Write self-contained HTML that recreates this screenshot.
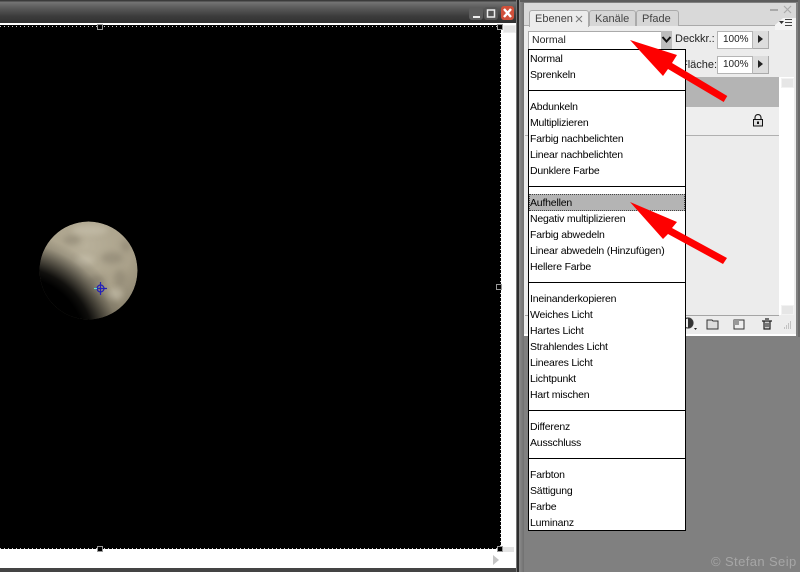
<!DOCTYPE html>
<html><head><meta charset="utf-8">
<style>
html,body{margin:0;padding:0;background:#808080}
body{width:800px;height:572px;position:relative;overflow:hidden;font-family:"Liberation Sans",sans-serif;font-size:11px;color:#000}
.a{position:absolute}
.t{position:absolute;white-space:nowrap;line-height:16px}
.m{position:absolute;left:1px;line-height:16px;white-space:nowrap;height:16px;font-size:10.5px;letter-spacing:-.2px}
.s{position:absolute;left:0;width:156px;height:1px;background:#000}
</style></head><body>
<!-- document window -->
<div class="a" style="left:0;top:0;width:520px;height:572px;background:#333"></div>
<div class="a" style="left:0;top:0;width:517px;height:23px;background:linear-gradient(#3a3a3a 0,#3a3a3a 1px,#747474 2px,#5a5a5a 8px,#3c3c3c 16px,#303030 23px)"></div>
<div class="a" style="left:0;top:23px;width:516px;height:545px;background:#fff"></div>
<div class="a" style="left:516px;top:0;width:1px;height:572px;background:#777"></div>
<div class="a" style="left:517px;top:0;width:2px;height:572px;background:#2c2c2c"></div>
<div class="a" style="left:519px;top:0;width:5px;height:572px;background:linear-gradient(90deg,#8c8c8c,#707070)"></div>
<div class="a" style="left:0;top:568px;width:516px;height:4px;background:#444"></div>
<div class="a" style="left:0;top:25px;width:500px;height:524px;background:#000"></div>
<div class="a" style="left:0;top:26px;width:500px;height:1px;background:repeating-linear-gradient(90deg,#ccc 0,#ccc 1px,#000 1px,#000 4px)"></div>
<div class="a" style="left:0;top:548px;width:500px;height:1px;background:repeating-linear-gradient(90deg,#ccc 0,#ccc 1px,#000 1px,#000 4px)"></div>
<div class="a" style="left:500px;top:25px;width:1px;height:524px;background:repeating-linear-gradient(#ccc 0,#ccc 1px,#000 1px,#000 4px)"></div>
<div class="a" style="left:97px;top:24px;width:4px;height:4px;border:1px solid #999;background:#000"></div>
<div class="a" style="left:97px;top:546px;width:4px;height:4px;border:1px solid #999;background:#000"></div>
<div class="a" style="left:496px;top:284px;width:4px;height:4px;border:1px solid #999;background:#000"></div>
<div class="a" style="left:497px;top:24px;width:4px;height:4px;border:1px solid #999;background:#000"></div>
<div class="a" style="left:497px;top:546px;width:4px;height:4px;border:1px solid #999;background:#000"></div>
<div class="a" style="left:503px;top:25px;width:11px;height:6px;background:#e4e4e4;border:1px solid #eee"></div>
<div class="a" style="left:503px;top:547px;width:11px;height:5px;background:#e4e4e4"></div>
<div class="a" style="left:493px;top:555px;width:0;height:0;border-left:6px solid #c4c4c4;border-top:5px solid transparent;border-bottom:5px solid transparent"></div>
<!-- window buttons -->
<svg class="a" style="left:466px;top:4px" width="52" height="20">
<rect x="3" y="3" width="14" height="13" rx="3" fill="#5c5c5c"/>
<rect x="7" y="12" width="7" height="2" fill="#eee"/>
<rect x="18" y="3" width="14" height="13" rx="3" fill="#555"/>
<rect x="21.500" y="6" width="7" height="7" fill="none" stroke="#eee" stroke-width="1.500"/>
<rect x="35" y="2" width="13" height="14" rx="3" fill="#d0503a"/>
<path d="M38 5l7 8M45 5l-7 8" stroke="#fff" stroke-width="2.400"/>
</svg>
<!-- moon -->
<svg class="a" style="left:20px;top:210px" width="130" height="120">
<defs>
<radialGradient id="g" gradientUnits="userSpaceOnUse" cx="66" cy="36" r="70">
<stop offset="0" stop-color="#b8b09a"/><stop offset=".65" stop-color="#aaa18a"/><stop offset="1" stop-color="#8f8772"/>
</radialGradient>
<radialGradient id="sh" gradientUnits="userSpaceOnUse" cx="-4" cy="136" r="112">
<stop offset="0" stop-color="#000"/><stop offset=".62" stop-color="#000"/><stop offset=".7" stop-color="#000" stop-opacity=".9"/><stop offset=".8" stop-color="#000" stop-opacity=".55"/><stop offset=".92" stop-color="#000" stop-opacity=".12"/><stop offset="1" stop-color="#000" stop-opacity="0"/>
</radialGradient>
<filter id="b"><feGaussianBlur stdDeviation="3"/></filter>
<clipPath id="c"><circle cx="68.500" cy="60.500" r="49"/></clipPath>
</defs>
<g clip-path="url(#c)">
<circle cx="68.500" cy="60.500" r="49" fill="url(#g)"/>
<g filter="url(#b)" fill="#8a8270" opacity=".55">
<ellipse cx="92" cy="48" rx="11" ry="6"/>
<ellipse cx="106" cy="36" rx="5" ry="6"/>
<ellipse cx="52" cy="30" rx="9" ry="5"/>
<ellipse cx="78" cy="70" rx="8" ry="5"/>
<ellipse cx="100" cy="68" rx="6" ry="8"/>
</g>
<g filter="url(#b)" fill="#cbc4b0" opacity=".55">
<ellipse cx="70" cy="20" rx="18" ry="5"/>
<ellipse cx="65" cy="50" rx="9" ry="5"/>
<ellipse cx="95" cy="84" rx="8" ry="6"/>
</g>
<rect width="130" height="120" fill="url(#sh)"/>
</g>
<g stroke="#2420b8" fill="none" stroke-width="1.200">
<circle cx="80.500" cy="78.500" r="3.500"/>
<path d="M80.500 72v13M74 78.500h13"/>
</g>
<path d="M74 78.500h3" stroke="#60e0d0" stroke-width="1.200"/>
</svg>
<!-- panel -->
<div class="a" style="left:520px;top:0;width:280px;height:2px;background:#5c5c5c"></div>
<div class="a" style="left:798px;top:0;width:2px;height:337px;background:#6a6a6a"></div>
<div class="a" style="left:524px;top:3px;width:272px;height:331px;background:#ececec;border-bottom:2px solid #fff"></div>
<div class="a" style="left:524px;top:3px;width:272px;height:23px;background:#d9d9d9"></div>
<div class="a" style="left:524px;top:25px;width:272px;height:1px;background:#aaa"></div>
<div class="a" style="left:529px;top:10px;width:58px;height:16px;background:#ececec;border:1px solid #aaa;border-bottom:none;border-radius:3px 3px 0 0"></div>
<div class="a" style="left:589px;top:10px;width:45px;height:15px;background:#d6d6d6;border:1px solid #aaa;border-bottom:none;border-radius:3px 3px 0 0"></div>
<div class="a" style="left:636px;top:10px;width:41px;height:15px;background:#d6d6d6;border:1px solid #aaa;border-bottom:none;border-radius:3px 3px 0 0"></div>
<div class="t" style="left:535px;top:11px;color:#444">Ebenen</div>
<svg class="a" style="left:575px;top:15px" width="9" height="9"><path d="M1 1l6 6M7 1l-6 6" stroke="#777" stroke-width="1"/></svg>
<div class="t" style="left:595px;top:11px;color:#444">Kanäle</div>
<div class="t" style="left:642px;top:11px;color:#444">Pfade</div>
<svg class="a" style="left:770px;top:4px" width="26" height="26">
<path d="M0 6h8" stroke="#999" stroke-width="1.500"/>
<path d="M14 2l7 7M21 2l-7 7" stroke="#aaa" stroke-width="1.200"/>
<path d="M5 21l8-7h13v12H5z" fill="#f4f4f4"/>
<path d="M9 17h5l-2.500 3z" fill="#333"/>
<path d="M15 15.500h7M15 18.500h7M15 21.500h7" stroke="#444" stroke-width="1"/>
</svg>
<!-- blend select -->
<div class="a" style="left:528px;top:31px;width:132px;height:17px;background:#fff;border:1px solid #aaa"></div>
<div class="t" style="left:532px;top:32px;color:#222;font-size:10.500px">Normal</div>
<div class="a" style="left:661px;top:31px;width:11px;height:18px;background:#bdbdbd"></div>
<svg class="a" style="left:661px;top:34px" width="11" height="11"><path d="M1.500 3l4 4.500 4-4.500" fill="none" stroke="#111" stroke-width="2"/></svg>
<div class="t" style="left:675px;top:31px;color:#222">Deckkr.:</div>
<div class="t" style="left:681px;top:57px;color:#222">Fläche:</div>
<div class="a" style="left:717px;top:31px;width:34px;height:16px;background:#fff;border:1px solid #b5b5b5"></div>
<div class="a" style="left:717px;top:56px;width:34px;height:16px;background:#fff;border:1px solid #b5b5b5"></div>
<div class="t" style="left:723px;top:32px;color:#222;font-size:10px">100%</div>
<div class="t" style="left:723px;top:57px;color:#222;font-size:10px">100%</div>
<div class="a" style="left:753px;top:31px;width:15px;height:17px;background:#ddd;border-right:1px solid #aaa;border-bottom:1px solid #aaa"></div>
<div class="a" style="left:753px;top:56px;width:15px;height:17px;background:#ddd;border-right:1px solid #aaa;border-bottom:1px solid #aaa"></div>
<div class="a" style="left:758px;top:35px;width:0;height:0;border-left:5px solid #222;border-top:4px solid transparent;border-bottom:4px solid transparent"></div>
<div class="a" style="left:758px;top:60px;width:0;height:0;border-left:5px solid #222;border-top:4px solid transparent;border-bottom:4px solid transparent"></div>
<!-- layers -->
<div class="a" style="left:528px;top:77px;width:251px;height:30px;background:#b4b4b4"></div>
<div class="a" style="left:528px;top:107px;width:251px;height:28px;background:#eee"></div>
<div class="a" style="left:525px;top:135px;width:254px;height:1px;background:#b0b0b0"></div>
<div class="a" style="left:525px;top:315px;width:254px;height:1px;background:#a5a5a5"></div>
<div class="a" style="left:779px;top:77px;width:15px;height:238px;background:#fff"></div>
<div class="a" style="left:781px;top:78px;width:11px;height:8px;background:#e6e6e6;border:1px solid #f2f2f2"></div>
<div class="a" style="left:781px;top:305px;width:11px;height:8px;background:#e6e6e6;border:1px solid #f2f2f2"></div>
<svg class="a" style="left:752px;top:114px" width="12" height="13">
<path d="M3 6V3.500a3 3 0 016 0V6" fill="none" stroke="#222" stroke-width="1.200"/>
<rect x="1.500" y="5.500" width="9" height="6.500" fill="#ddd" stroke="#111"/>
<rect x="5" y="7.500" width="2" height="2.500" fill="#111"/>
</svg>
<!-- bottom icons -->
<svg class="a" style="left:680px;top:314px" width="116" height="20">
<circle cx="8" cy="9" r="5" fill="#eee" stroke="#444" stroke-width="1.200"/>
<path d="M8 4a5 5 0 010 10z" fill="#333"/>
<path d="M14 14h3l-1.500 2z" fill="#222"/>
<path d="M27 6h5l1 1h5v8H27z" fill="#ddd" stroke="#333"/>
<rect x="54" y="6" width="10" height="9" fill="#eee" stroke="#333"/>
<rect x="54" y="6" width="5" height="5" fill="#999"/>
<path d="M82 7h10M84 7v8h6V7M85 5h4" fill="#ccc" stroke="#222" stroke-width="1.200"/>
<path d="M86 9v4M88 9v4" stroke="#222"/>
<path d="M110 8h1M108 10h1M110 10h1M106 12h1M108 12h1M110 12h1M104 14h1M106 14h1M108 14h1M110 14h1" stroke="#999"/>
</svg>
<!-- menu -->
<div class="a" style="left:528px;top:49px;width:156px;height:480px;background:#fff;border:1px solid #000">
<div class="m" style="top:1px">Normal</div>
<div class="m" style="top:17px">Sprenkeln</div>
<div class="s" style="top:40px"></div>
<div class="m" style="top:49px">Abdunkeln</div>
<div class="m" style="top:65px">Multiplizieren</div>
<div class="m" style="top:81px">Farbig nachbelichten</div>
<div class="m" style="top:97px">Linear nachbelichten</div>
<div class="m" style="top:113px">Dunklere Farbe</div>
<div class="s" style="top:136px"></div>
<div class="a" style="left:0;top:144px;width:154px;height:15px;background:#b4b4b4;border:1px dotted #444"></div>
<div class="m" style="top:145px">Aufhellen</div>
<div class="m" style="top:161px">Negativ multiplizieren</div>
<div class="m" style="top:177px">Farbig abwedeln</div>
<div class="m" style="top:193px">Linear abwedeln (Hinzufügen)</div>
<div class="m" style="top:209px">Hellere Farbe</div>
<div class="s" style="top:232px"></div>
<div class="m" style="top:241px">Ineinanderkopieren</div>
<div class="m" style="top:257px">Weiches Licht</div>
<div class="m" style="top:273px">Hartes Licht</div>
<div class="m" style="top:289px">Strahlendes Licht</div>
<div class="m" style="top:305px">Lineares Licht</div>
<div class="m" style="top:321px">Lichtpunkt</div>
<div class="m" style="top:337px">Hart mischen</div>
<div class="s" style="top:360px"></div>
<div class="m" style="top:369px">Differenz</div>
<div class="m" style="top:385px">Ausschluss</div>
<div class="s" style="top:408px"></div>
<div class="m" style="top:417px">Farbton</div>
<div class="m" style="top:433px">Sättigung</div>
<div class="m" style="top:449px">Farbe</div>
<div class="m" style="top:465px">Luminanz</div>
</div>
<!-- arrows -->
<svg class="a" style="left:0;top:0" width="800" height="572">
<path d="M630 40L677 55 672 63 727.300 96 723.700 102 668 69 663 76Z" fill="#fe0000"/>
<path d="M630 202L677 222 672 228 727 258 723 264 668 234 663 239Z" fill="#fe0000"/>
</svg>
<div class="t" style="left:711px;top:554px;font-size:13px;color:#a6a6a6;letter-spacing:.4px">© Stefan Seip</div>
</body></html>
